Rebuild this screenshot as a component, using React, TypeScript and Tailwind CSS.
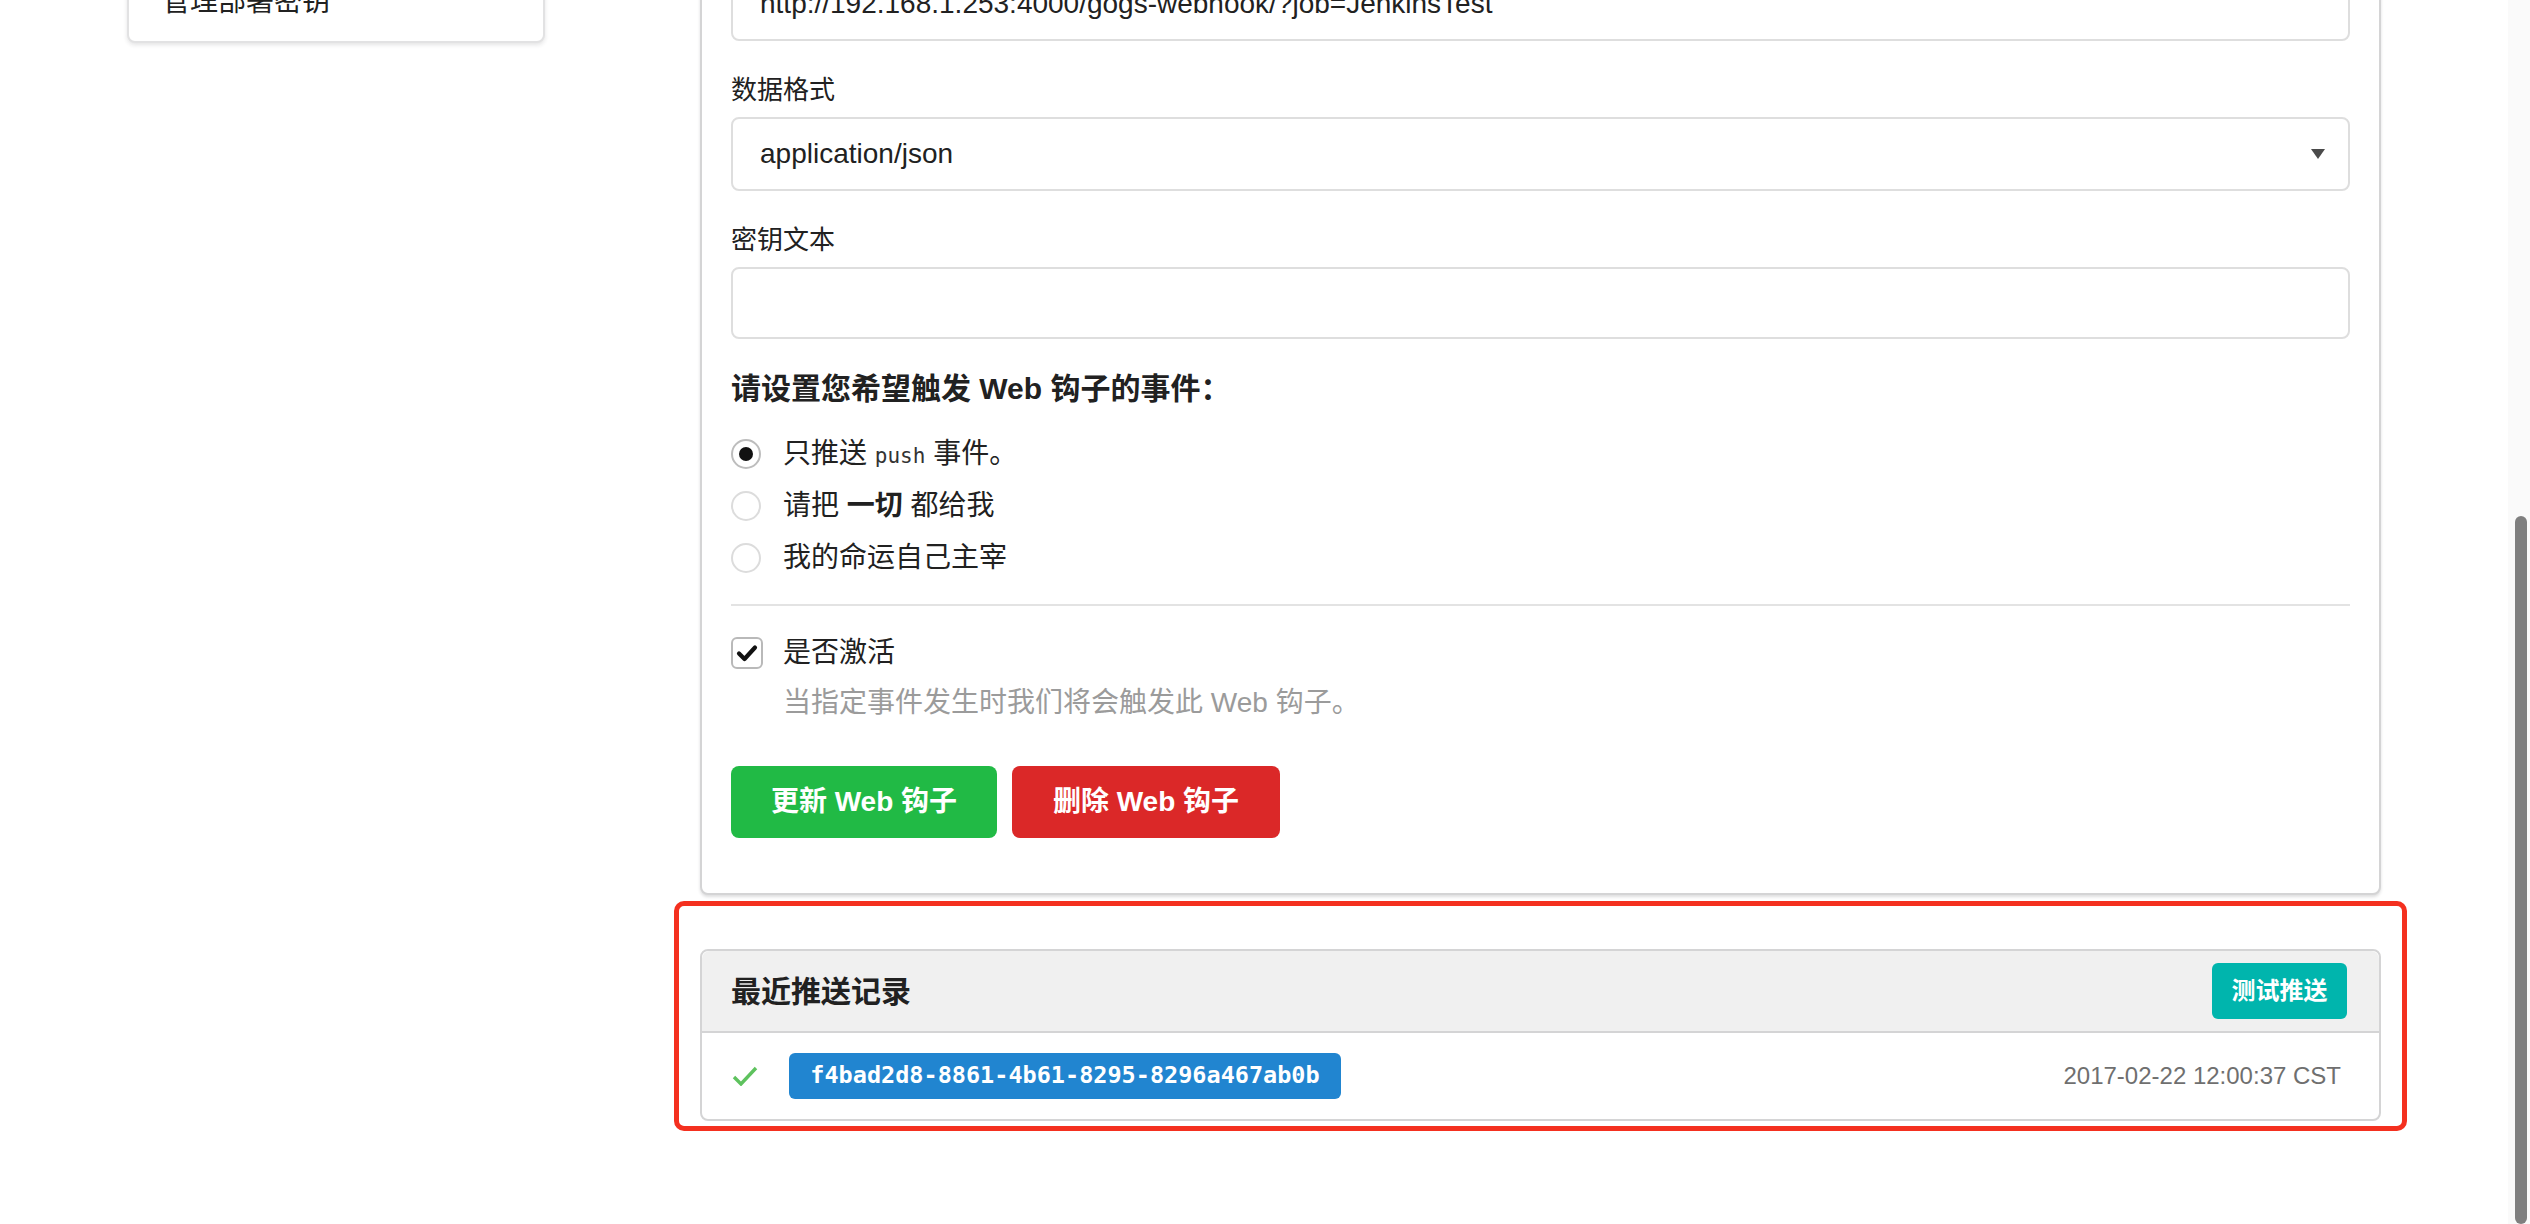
import React from "react";

function Radio({ checked }: { checked?: boolean }) {
  return (
    <span
      className={
        checked
          ? "flex h-[30px] w-[30px] shrink-0 items-center justify-center rounded-full border-2 border-[#bdbdbd] bg-white"
          : "flex h-[30px] w-[30px] shrink-0 items-center justify-center rounded-full border-2 border-[#dcdcdc] bg-white"
      }
    >
      {checked ? <span className="h-[14px] w-[14px] rounded-full bg-[#111]" /> : null}
    </span>
  );
}

export default function App() {
  return (
    <div className="flex h-[1224px] w-[2530px] overflow-hidden bg-white font-['Liberation_Sans','Noto_Sans_CJK_SC',sans-serif] text-[28px] text-[#212121]">
      <div className="flex flex-1 items-start pl-[127px]">
        {/* sidebar menu */}
        <div className="-mt-[40px] w-[418px] shrink-0 rounded-lg border-2 border-[#e2e2e3] bg-white shadow-[0_2px_4px_rgba(34,36,38,0.12)]">
          <div className="px-[33px] pt-[20px] pb-[19px] leading-[40px]">管理部署密钥</div>
        </div>

        {/* main column */}
        <div className="ml-[155px] w-[1681px] shrink-0">
          <div className="-mt-[66px] rounded-b-lg border-2 border-[#d4d4d5] bg-white px-[29px] pt-[30px] pb-[55px] shadow-[0_2px_3px_rgba(34,36,38,0.15)]">
            <div className="flex h-[75px] items-center rounded-lg border-2 border-[#dedede] px-[27px] leading-[36px]">
              http://192.168.1.253:4000/gogs-webhook/?job=JenkinsTest
            </div>

            <div className="mt-[31px] mb-[8px] text-[26px] leading-[37px]">数据格式</div>
            <div className="flex h-[74px] items-center justify-between rounded-lg border-2 border-[#dedede] pl-[27px] pr-[23px]">
              <span>application/json</span>
              <svg width="14" height="10" viewBox="0 0 14 10">
                <polygon points="0,0 14,0 7,10" fill="#4a4a4a" />
              </svg>
            </div>

            <div className="mt-[31px] mb-[8px] text-[26px] leading-[37px]">密钥文本</div>
            <div className="h-[72px] rounded-lg border-2 border-[#dedede]" />

            <div className="mt-[29px] text-[30px] font-bold leading-[42px]">请设置您希望触发 Web 钩子的事件：</div>

            <div className="mt-[18px] flex flex-col">
              <div className="flex h-[52px] items-center">
                <Radio checked />
                <span className="ml-[22px]">
                  只推送 <code className="font-['DejaVu_Sans_Mono',monospace] text-[21px] text-[#333]">push</code> 事件。
                </span>
              </div>
              <div className="flex h-[52px] items-center">
                <Radio />
                <span className="ml-[22px]">
                  请把 <span className="font-bold">一切</span> 都给我
                </span>
              </div>
              <div className="flex h-[52px] items-center">
                <Radio />
                <span className="ml-[22px]">我的命运自己主宰</span>
              </div>
            </div>

            <div className="mt-[20px] h-[2px] bg-[#e3e3e3]" />

            <div className="mt-[27px] flex h-[40px] items-center">
              <span className="flex h-[32px] w-[32px] shrink-0 items-center justify-center rounded-[6px] border-2 border-[#b9b9b9] bg-white">
                <svg width="22" height="18" viewBox="0 0 22 18">
                  <path d="M3 9.5 L8.5 15 L19 3.5" fill="none" stroke="#111" strokeWidth="4.2" strokeLinecap="round" strokeLinejoin="round" />
                </svg>
              </span>
              <span className="ml-[20px]">是否激活</span>
            </div>
            <div className="mt-[10px] pl-[52px] leading-[40px] text-[#9b9b9b]">当指定事件发生时我们将会触发此 Web 钩子。</div>

            <div className="mt-[43px] flex gap-[15px]">
              <button className="flex h-[72px] w-[266px] items-center justify-center rounded-lg bg-[#21ba45] font-bold text-white">
                更新 Web 钩子
              </button>
              <button className="flex h-[72px] w-[268px] items-center justify-center rounded-lg bg-[#db2828] font-bold text-white">
                删除 Web 钩子
              </button>
            </div>
          </div>

          {/* highlighted recent deliveries */}
          <div className="mt-[6px] -mx-[26px] rounded-[10px] border-[5px] border-[#f4301f] px-[21px] pt-[43px] pb-[5px]">
            <div className="rounded-lg border-2 border-[#d4d4d5] bg-white">
              <div className="flex h-[82px] items-center justify-between rounded-t-lg border-b-2 border-[#d4d4d5] bg-[#f0f0f0] pl-[29px] pr-[32px]">
                <span className="text-[30px] font-bold">最近推送记录</span>
                <button className="flex h-[56px] w-[135px] items-center justify-center rounded-md bg-[#00b5ad] text-[24px] font-bold text-white">
                  测试推送
                </button>
              </div>
              <div className="flex h-[86px] items-center pl-[30px] pr-[38px]">
                <svg width="26" height="20" viewBox="0 0 26 20" className="shrink-0">
                  <path d="M2 11 L9 18 L24 2" fill="none" stroke="#5ec25e" strokeWidth="3.4" />
                </svg>
                <span className="ml-[31px] flex h-[46px] w-[552px] items-center justify-center rounded-md bg-[#2185d0] font-['DejaVu_Sans_Mono',monospace] text-[23.5px] font-bold text-white">
                  f4bad2d8-8861-4b61-8295-8296a467ab0b
                </span>
                <span className="ml-auto text-[24px] text-[#6f6f6f]">2017-02-22 12:00:37 CST</span>
              </div>
            </div>
          </div>
        </div>
      </div>

      {/* scrollbar */}
      <div className="w-[22px] shrink-0 bg-[#fafafa] pl-[7px] pt-[516px]">
        <div className="h-full w-[12px] rounded-full bg-[#7f7f7f]" />
      </div>
    </div>
  );
}
